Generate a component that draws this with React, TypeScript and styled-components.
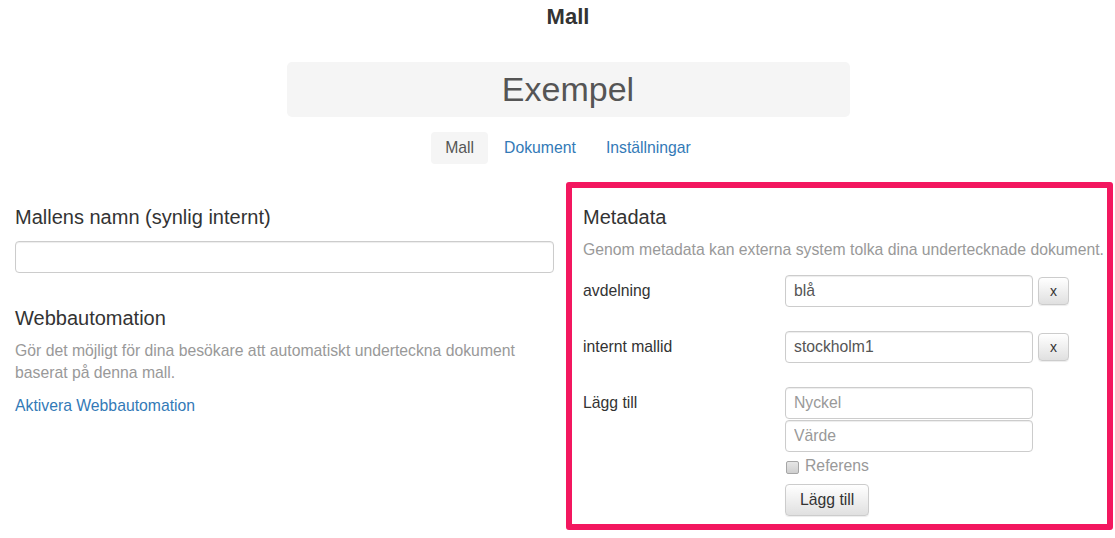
import styled, { createGlobalStyle } from "styled-components";

const GlobalStyle = createGlobalStyle`
    html, body {
        margin: 0;
        padding: 0;
        background: #fff;
        overflow: hidden;
    }
    body {
        font-family: "Liberation Sans", Arial, sans-serif;
        font-size: 15.75px;
        color: #333;
    }
`;

const Page = styled.div`
    width: 1115px;
    height: 538px;
    box-sizing: border-box;
`;

const Header = styled.header`
    padding-left: 21px;
    display: flex;
    flex-direction: column;
    align-items: center;
`;

const PageTitle = styled.h1`
    margin: 5px 0 0;
    font-size: 22px;
    line-height: 24px;
    font-weight: 700;
    color: #333;
`;

const NameBanner = styled.div`
    margin-top: 33px;
    width: 563px;
    height: 55px;
    background: #f5f5f5;
    border-radius: 5px;
    display: flex;
    align-items: center;
    justify-content: center;
    font-size: 34px;
    color: #555;
`;

const Tabs = styled.nav`
    margin-top: 15px;
    display: flex;
    gap: 2px;
`;

const Tab = styled.a<{ $active?: boolean }>`
    height: 32px;
    padding: 0 14px;
    display: flex;
    align-items: center;
    border-radius: 4px;
    font-size: 15.75px;
    text-decoration: none;
    cursor: pointer;
    background: ${p => (p.$active ? "#f5f5f5" : "transparent")};
    color: ${p => (p.$active ? "#555" : "#337ab7")};
`;

const Columns = styled.div`
    margin-top: 18px;
    display: flex;
    align-items: flex-start;
    gap: 12px;
    padding-left: 15px;
`;

const LeftColumn = styled.section`
    width: 539px;
    padding-top: 24px;
`;

const MetaBox = styled.section`
    width: 547px;
    height: 348px;
    box-sizing: border-box;
    border: 6px solid #f3175f;
    border-radius: 3px;
    padding: 18px 0 0 11px;
`;

const Heading = styled.h3<{ $gap?: number }>`
    margin: ${p => p.$gap ?? 0}px 0 0;
    font-size: 20px;
    line-height: 22px;
    font-weight: 400;
    color: #333;
`;

const Muted = styled.p<{ $nowrap?: boolean }>`
    margin: 11px 0 0;
    font-size: 15.75px;
    line-height: 22px;
    color: #999;
    white-space: ${p => (p.$nowrap ? "nowrap" : "normal")};
`;

const Link = styled.a`
    display: block;
    margin-top: 11px;
    font-size: 15.75px;
    line-height: 22px;
    color: #337ab7;
    text-decoration: none;
`;

const TextInput = styled.input<{ $width?: number }>`
    display: block;
    box-sizing: border-box;
    width: ${p => p.$width ?? 248}px;
    height: 32px;
    margin: 0;
    padding: 0 8px;
    border: 1px solid #ccc;
    border-radius: 4px;
    box-shadow: inset 0 1px 1px rgba(0, 0, 0, 0.075);
    font-family: "Liberation Sans", Arial, sans-serif;
    font-size: 15.75px;
    color: #555;
    background: #fff;
    outline: none;

    &::placeholder {
        color: #999;
    }
`;

const NameInput = styled(TextInput)`
    margin-top: 13px;
`;

const MetaList = styled.div`
    margin-top: 14px;
    display: flex;
    flex-direction: column;
    gap: 24px;
`;

const MetaRow = styled.div`
    display: grid;
    grid-template-columns: 202px auto;
    align-items: start;
`;

const MetaKey = styled.span`
    font-size: 15.75px;
    line-height: 32px;
    color: #333;
`;

const Controls = styled.div`
    display: flex;
    align-items: center;
    gap: 5px;
`;

const Stack = styled.div`
    display: flex;
    flex-direction: column;
    gap: 1px;
`;

const Button = styled.button<{ $small?: boolean }>`
    box-sizing: border-box;
    height: ${p => (p.$small ? 28 : 32)}px;
    padding: ${p => (p.$small ? "0 11px" : "0 14px")};
    border: 1px solid #ccc;
    border-radius: 4px;
    background: linear-gradient(to bottom, #fff 0%, #e0e0e0 100%);
    box-shadow: inset 0 1px 0 rgba(255, 255, 255, 0.15), 0 1px 1px rgba(0, 0, 0, 0.075);
    font-family: "Liberation Sans", Arial, sans-serif;
    font-size: ${p => (p.$small ? 14 : 15.75)}px;
    color: #333;
    cursor: pointer;
`;

const CheckLabel = styled.label`
    margin-top: 3px;
    display: flex;
    align-items: center;
    gap: 6px;
    font-size: 15.75px;
    line-height: 20px;
    color: #999;
`;

const CheckBox = styled.span`
    width: 11px;
    height: 11px;
    margin-top: 3px;
    margin-left: 1px;
    border: 1px solid #a6a6a6;
    border-radius: 2px;
    background: linear-gradient(to bottom, #e6e6e6, #cfcfcf);
`;

const AddButton = styled(Button)`
    margin-top: 7px;
    align-self: flex-start;
`;

const metadata = [
    { key: "avdelning", value: "blå" },
    { key: "internt mallid", value: "stockholm1" },
];

export default function App() {
    return (
        <Page>
            <GlobalStyle />
            <Header>
                <PageTitle>Mall</PageTitle>
                <NameBanner>Exempel</NameBanner>
                <Tabs>
                    <Tab $active>Mall</Tab>
                    <Tab>Dokument</Tab>
                    <Tab>Inställningar</Tab>
                </Tabs>
            </Header>

            <Columns>
                <LeftColumn>
                    <Heading>Mallens namn (synlig internt)</Heading>
                    <NameInput $width={539} />
                    <Heading $gap={34}>Webbautomation</Heading>
                    <Muted>
                        Gör det möjligt för dina besökare att automatiskt underteckna dokument
                        baserat på denna mall.
                    </Muted>
                    <Link>Aktivera Webbautomation</Link>
                </LeftColumn>

                <MetaBox>
                    <Heading>Metadata</Heading>
                    <Muted $nowrap>
                        Genom metadata kan externa system tolka dina undertecknade dokument.
                    </Muted>
                    <MetaList>
                        {metadata.map(m => (
                            <MetaRow key={m.key}>
                                <MetaKey>{m.key}</MetaKey>
                                <Controls>
                                    <TextInput defaultValue={m.value} />
                                    <Button $small>x</Button>
                                </Controls>
                            </MetaRow>
                        ))}
                        <MetaRow>
                            <MetaKey>Lägg till</MetaKey>
                            <Stack>
                                <TextInput placeholder="Nyckel" />
                                <TextInput placeholder="Värde" />
                                <CheckLabel>
                                    <CheckBox />
                                    Referens
                                </CheckLabel>
                                <AddButton>Lägg till</AddButton>
                            </Stack>
                        </MetaRow>
                    </MetaList>
                </MetaBox>
            </Columns>
        </Page>
    );
}
